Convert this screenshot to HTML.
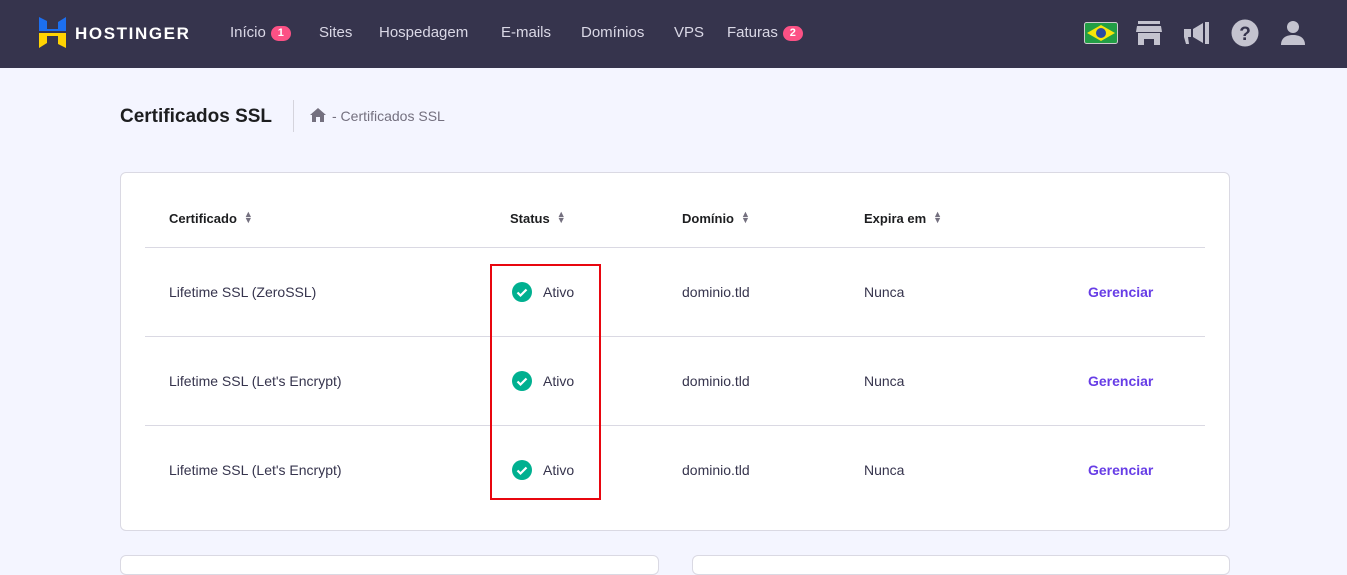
<!DOCTYPE html>
<html><head><meta charset="utf-8"><style>
*{margin:0;padding:0;box-sizing:border-box}
body{width:1347px;height:557px;overflow:hidden;background:#f4f5ff;font-family:"Liberation Sans",sans-serif;position:relative;color:#2f1c6a}
.nav{position:absolute;left:0;top:0;width:1347px;height:68px;background:#36344d}
.nav .t{position:absolute;top:24px;font-size:15px;color:#dad8e6}
.badge{display:inline-block;background:#fc5185;color:#fff;font-size:11px;font-weight:bold;border-radius:8px;width:20px;height:15px;line-height:15px;text-align:center;vertical-align:1px;margin-left:5px}
.abs{position:absolute}
.card{position:absolute;background:#fff;border:1px solid #dad9e3;border-radius:6px}
.h{position:absolute;top:211px;font-size:13px;font-weight:bold;color:#1d1e20}
.sort{display:inline-block;margin-left:7px;vertical-align:0px;color:#74707f;font-size:9px;line-height:6px}
.line{position:absolute;left:145px;width:1060px;height:1px;background:#dad9e3}
.c{position:absolute;font-size:14px;color:#36344d}
.g{position:absolute;left:1088px;font-size:14px;font-weight:bold;color:#673de6}
.chk{position:absolute;left:512px;width:20px;height:20px;border-radius:50%;background:#00b090}
</style></head><body>
<div class="nav">
<svg class="abs" style="left:39px;top:17px" width="27" height="31" viewBox="0 0 27 31"><path d="M0 0l8 4v8h11V5l8-5v14H0z" fill="#1c6ff0"/><path d="M0 16h27v15l-8-4v-8H8v7l-8 5z" fill="#ffd302"/></svg>
<div class="abs" style="left:75px;top:24px;font-size:17px;font-weight:bold;color:#fff;letter-spacing:1.6px">HOSTINGER</div>
<div class="t" style="left:230px">Início<span class="badge">1</span></div>
<div class="t" style="left:319px">Sites</div>
<div class="t" style="left:379px">Hospedagem</div>
<div class="t" style="left:501px">E-mails</div>
<div class="t" style="left:581px">Domínios</div>
<div class="t" style="left:674px">VPS</div>
<div class="t" style="left:727px">Faturas<span class="badge">2</span></div>
<svg class="abs" style="left:1084px;top:22px" width="34" height="22"><rect x="0.5" y="0.5" width="33" height="21" rx="2" fill="#229e45" stroke="#ccc"/><path d="M17 3L31 11 17 19 3 11z" fill="#f8e509"/><circle cx="17" cy="11" r="5" fill="#2b49a3"/></svg>
<svg class="abs" style="left:1136px;top:21px" width="26" height="24" fill="#c4c3cf"><rect x="2" y="0" width="22" height="3"/><path d="M1 5h24l1 6H0z"/><path d="M2 12h22v12h-6v-6H8v6H2z"/></svg>
<svg class="abs" style="left:1184px;top:21px" width="26" height="24" fill="#c4c3cf"><path d="M0 8h7v8H4l1 7H2L0 16z"/><path d="M9 8l10-6v20L9 16z"/><rect x="21" y="1" width="4" height="22"/></svg>
<svg class="abs" style="left:1231px;top:19px" width="28" height="28"><circle cx="14" cy="14" r="13.5" fill="#c4c3cf"/><text x="14" y="21" text-anchor="middle" font-family="Liberation Sans" font-weight="bold" font-size="19" fill="#36344d">?</text></svg>
<svg class="abs" style="left:1281px;top:21px" width="24" height="24" fill="#c4c3cf"><circle cx="12" cy="6" r="6"/><path d="M0 24c0-7 5-10 12-10s12 3 12 10z"/></svg>
</div>
<div class="abs" style="left:120px;top:106px;font-size:19px;font-weight:bold;color:#1d1e20">Certificados SSL</div>
<div class="abs" style="left:293px;top:100px;width:1px;height:32px;background:#d5d4dd"></div>
<svg class="abs" style="left:310px;top:108px" width="16" height="14" fill="#74707f"><path d="M8 0l8 7h-2v7H10V9H6v5H2V7H0z"/></svg>
<div class="abs" style="left:332px;top:108px;font-size:14px;color:#74707f">- Certificados SSL</div>
<div class="card" style="left:120px;top:172px;width:1110px;height:359px"></div>
<div class="card" style="left:120px;top:555px;width:539px;height:20px"></div>
<div class="card" style="left:692px;top:555px;width:538px;height:20px"></div>
<div class="h" style="left:169px">Certificado<span class="sort">▲<br>▼</span></div>
<div class="h" style="left:510px">Status<span class="sort">▲<br>▼</span></div>
<div class="h" style="left:682px">Domínio<span class="sort">▲<br>▼</span></div>
<div class="h" style="left:864px">Expira em<span class="sort">▲<br>▼</span></div>
<div class="line" style="top:247px"></div>
<div class="line" style="top:336px"></div>
<div class="line" style="top:425px"></div>

<div class="c" style="left:169px;top:284px">Lifetime SSL (ZeroSSL)</div>
<div class="c" style="left:169px;top:373px">Lifetime SSL (Let's Encrypt)</div>
<div class="c" style="left:169px;top:462px">Lifetime SSL (Let's Encrypt)</div>
<div class="chk" style="top:282px"><svg width="20" height="20"><path d="M5.5 10.5l3 3 6-6" stroke="#fff" stroke-width="2.2" fill="none"/></svg></div>
<div class="chk" style="top:371px"><svg width="20" height="20"><path d="M5.5 10.5l3 3 6-6" stroke="#fff" stroke-width="2.2" fill="none"/></svg></div>
<div class="chk" style="top:460px"><svg width="20" height="20"><path d="M5.5 10.5l3 3 6-6" stroke="#fff" stroke-width="2.2" fill="none"/></svg></div>
<div class="c" style="left:543px;top:284px">Ativo</div>
<div class="c" style="left:543px;top:373px">Ativo</div>
<div class="c" style="left:543px;top:462px">Ativo</div>
<div class="c" style="left:682px;top:284px">dominio.tld</div>
<div class="c" style="left:682px;top:373px">dominio.tld</div>
<div class="c" style="left:682px;top:462px">dominio.tld</div>
<div class="c" style="left:864px;top:284px">Nunca</div>
<div class="c" style="left:864px;top:373px">Nunca</div>
<div class="c" style="left:864px;top:462px">Nunca</div>
<div class="g" style="top:284px">Gerenciar</div>
<div class="g" style="top:373px">Gerenciar</div>
<div class="g" style="top:462px">Gerenciar</div>
<div class="abs" style="left:490px;top:264px;width:111px;height:236px;border:2px solid #e8060f"></div>
</body></html>
